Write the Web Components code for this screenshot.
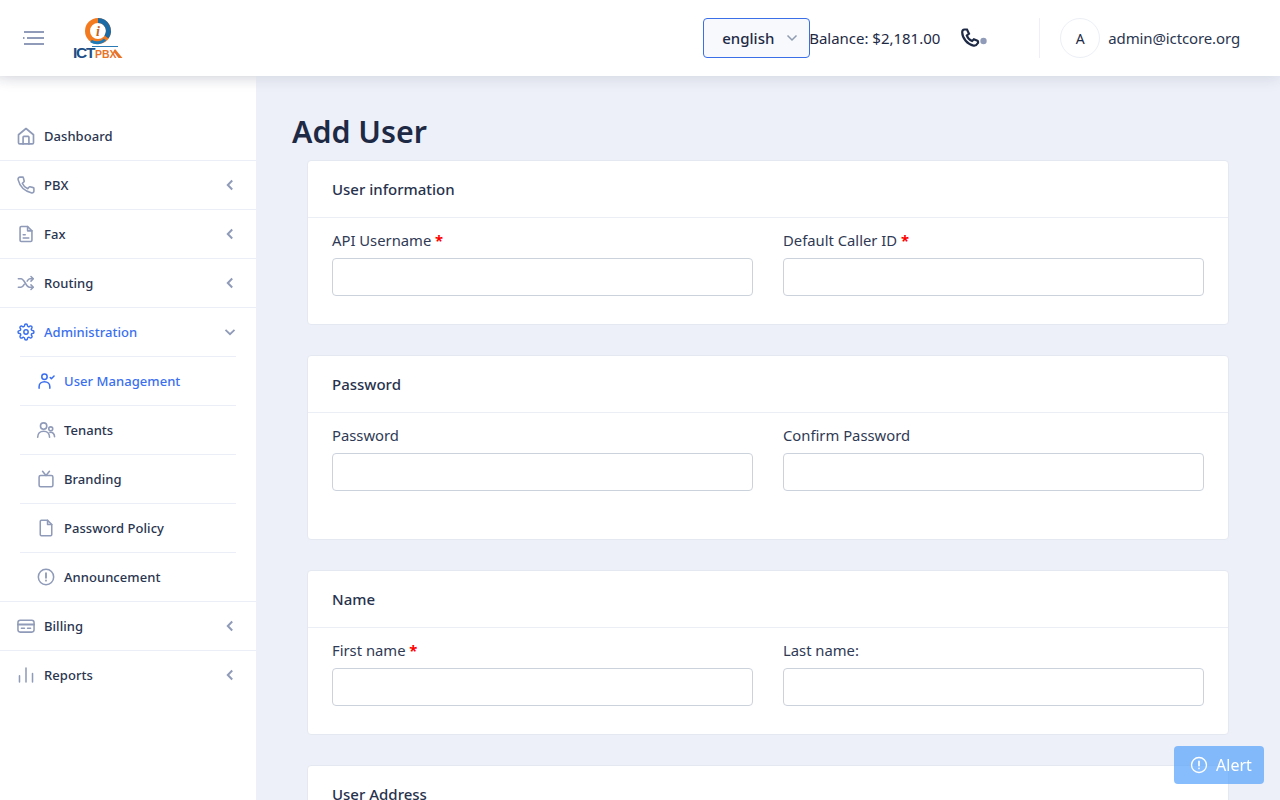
<!DOCTYPE html>
<html lang="en"><head><meta charset="utf-8"><title>Add User</title>
<style>
html,body{margin:0;height:100%;overflow:hidden;background:#edf0f8}
body{font-family:"Noto Sans","Open Sans",sans-serif;color:#1e2a45}
</style></head><body>
<app-shell>
  <app-header slot="header"></app-header>
  <app-sidebar slot="sidebar">
    <nav-item icon="home" label="Dashboard" line="full"></nav-item>
    <nav-item icon="phone" label="PBX" caret="left" line="full"></nav-item>
    <nav-item icon="file" label="Fax" caret="left" line="full"></nav-item>
    <nav-item icon="shuffle" label="Routing" caret="left" line="full"></nav-item>
    <nav-item icon="gear" label="Administration" caret="down" active line="inset"></nav-item>
    <nav-item sub icon="usercheck" label="User Management" active line="inset"></nav-item>
    <nav-item sub icon="users" label="Tenants" line="inset"></nav-item>
    <nav-item sub icon="tv" label="Branding" line="inset"></nav-item>
    <nav-item sub icon="page" label="Password Policy" line="inset"></nav-item>
    <nav-item sub icon="alert" label="Announcement" line="full"></nav-item>
    <nav-item icon="card" label="Billing" caret="left" line="full"></nav-item>
    <nav-item icon="bars" label="Reports" caret="left"></nav-item>
  </app-sidebar>
  <page-title>Add User</page-title>
  <form-card heading="User information">
    <form-field label="API Username" required></form-field>
    <form-field label="Default Caller ID" required></form-field>
  </form-card>
  <form-card heading="Password" extra="20">
    <form-field label="Password"></form-field>
    <form-field label="Confirm Password"></form-field>
  </form-card>
  <form-card heading="Name">
    <form-field label="First name" required></form-field>
    <form-field label="Last name:"></form-field>
  </form-card>
  <form-card heading="User Address"></form-card>
</app-shell>
<alert-button>Alert</alert-button>
<script>
const fit=(s,b)=>`<g transform="translate(12 12) scale(${s}) translate(-12 -12)">${b}</g>`;
const ICONS={
home:'<path d="M3 20V10.500L12 3l9 7.500V20a1.500 1.500 0 0 1-1.500 1.500h-15A1.500 1.500 0 0 1 3 20z"/><path d="M8.500 21.500V13.500a1 1 0 0 1 1-1h5a1 1 0 0 1 1 1v8"/>',
phone:fit(.95,'<path d="M4.500 2h3.200c.5 0 .9.300 1 .8l1 4.200c.1.400 0 .8-.3 1L7.300 9.800c1.300 3 3.900 5.600 6.900 6.900l1.800-2.100c.2-.3.600-.4 1-.3l4.200 1c.5.100.8.500.8 1v3.200c0 1.500-1.200 2.700-2.700 2.500C10 19.800 4.200 14 2 5.200 1.800 3.400 3 2 4.500 2z"/>'),
file:fit(.95,'<path d="M6 2.500h8l5.500 5.500v12a1.500 1.500 0 0 1-1.500 1.500H6A1.500 1.500 0 0 1 4.500 20V4A1.500 1.500 0 0 1 6 2.500z"/><path d="M14 2.500V8h5.500M8.500 13h2.500M8.500 17h7"/>'),
shuffle:fit(.92,'<path d="M2 6.500h3.500c4.500 0 6.500 11 11 11H21M2 17.500h3.500c1.800 0 3.100-1.700 4.200-3.700M13.500 9.500c1-1.700 2-3 3.500-3h4"/><path d="M18.500 3.500l3 3-3 3M18.500 14.500l3 3-3 3"/>'),
gear:fit(.87,'<circle cx="12" cy="12" r="3"/><path d="M19.400 15a1.650 1.650 0 0 0 .33 1.820l.06.06a2 2 0 0 1 0 2.830 2 2 0 0 1-2.830 0l-.06-.06a1.650 1.650 0 0 0-1.820-.33 1.650 1.650 0 0 0-1 1.510V21a2 2 0 0 1-2 2 2 2 0 0 1-2-2v-.09A1.650 1.650 0 0 0 9 19.400a1.650 1.650 0 0 0-1.820.33l-.06.06a2 2 0 0 1-2.830 0 2 2 0 0 1 0-2.830l.06-.06a1.650 1.650 0 0 0 .33-1.820 1.650 1.650 0 0 0-1.510-1H3a2 2 0 0 1-2-2 2 2 0 0 1 2-2h.09A1.650 1.650 0 0 0 4.600 9a1.650 1.650 0 0 0-.33-1.820l-.06-.06a2 2 0 0 1 0-2.830 2 2 0 0 1 2.830 0l.06.06a1.650 1.650 0 0 0 1.820.33H9a1.650 1.650 0 0 0 1-1.510V3a2 2 0 0 1 2-2 2 2 0 0 1 2 2v.09a1.650 1.650 0 0 0 1 1.510 1.650 1.650 0 0 0 1.820-.33l.06-.06a2 2 0 0 1 2.830 0 2 2 0 0 1 0 2.830l-.06.06a1.650 1.650 0 0 0-.33 1.820V9a1.650 1.650 0 0 0 1.510 1H21a2 2 0 0 1 2 2 2 2 0 0 1-2 2h-.09a1.650 1.650 0 0 0-1.510 1z"/>'),
usercheck:fit(.92,'<circle cx="10" cy="6.500" r="3.500"/><path d="M3 21.500v-2C3 15.500 6 13 10 13s7 2.500 7 6.500v2"/><path d="M17.500 7.500l1.500 1.500 3.500-3.500"/>'),
users:fit(.95,'<circle cx="9" cy="7" r="4"/><circle cx="18" cy="10.500" r="2.500"/><path d="M1.500 21c0-4.500 3-7.500 7.500-7.500s7.500 3 7.500 7.500"/><path d="M17 15c3.500-.5 5.800 1.800 5.800 5.500"/>'),
tv:fit(.92,'<rect x="3" y="7.500" width="18" height="14.500" rx="2"/><path d="M7.500 2l4.500 5.500L16.500 2"/>'),
page:fit(.92,'<path d="M6 2h8l5.500 5.500V20.500A1.500 1.500 0 0 1 18 22H6a1.500 1.500 0 0 1-1.500-1.500v-17A1.500 1.500 0 0 1 6 2z"/><path d="M14 2v5.500h5.500"/>'),
alert:fit(.92,'<circle cx="12" cy="12" r="10"/><path d="M12 7v6M12 16.500v.3" stroke-width="2.400"/>'),
card:fit(.92,'<rect x="1.500" y="4.500" width="21" height="15.500" rx="3"/><path d="M1.500 10h21" stroke-width="2.400"/><path d="M6 15h4M14 15h4"/>'),
bars:fit(.92,'<path d="M3.500 13v8M12 3v18M20.500 10v11"/>')
};
const def=(n,c)=>customElements.define(n,c);
class Base extends HTMLElement{constructor(){super();this.attachShadow({mode:'open'})}
 render(h){this.shadowRoot.innerHTML=h}}

def('app-shell',class extends Base{connectedCallback(){this.render(`<style>
:host{display:flex;flex-direction:column;height:100vh;overflow:hidden}
.body{flex:1;display:flex;min-height:0}
.side{flex:0 0 256px;display:block}
main{flex:1;min-width:0;overflow:hidden;padding:36px 51px 0 36px}
</style><slot name="header"></slot><div class="body"><div class="side"><slot name="sidebar"></slot></div><main><slot></slot></main></div>`)}});

def('app-header',class extends Base{connectedCallback(){this.render(`<style>
:host{display:flex;align-items:center;height:76px;background:#fff;box-shadow:0 2px 14px rgba(40,50,80,.13);position:relative;z-index:2;flex:none;box-sizing:border-box;padding:0 40px 0 23px;color:#1e2a45}
.burger{width:22px;height:16px;flex:none;display:block}
.logo{margin-left:27px;width:52px;height:44px;flex:none;display:block}
.spacer{flex:1}
.lang{box-sizing:border-box;width:107px;height:40px;border:1px solid #3a6fe8;border-radius:4px;background:#f7f9fd;display:flex;align-items:center;padding-left:18px;font-size:15px;font-weight:500;color:#1e2a45;gap:12px}
.bal{font-size:15px;color:#1e2a45;white-space:nowrap;letter-spacing:-.02px;margin-left:-1px}
.ph{width:28px;height:24px;margin-left:21px;flex:none;display:block}
.sep{width:1px;height:40px;background:#eef0f5;margin-left:50px;margin-right:20px;flex:none}
.av{box-sizing:border-box;width:40px;height:40px;border:1px solid #eceff5;border-radius:50%;display:flex;align-items:center;justify-content:center;font-size:14px;flex:none}
.mail{margin-left:8px;font-size:15px;white-space:nowrap;color:#2a3550;letter-spacing:-.12px}
svg text{font-family:"Liberation Sans",sans-serif}
</style>
<svg class="burger" viewBox="0 0 22 16" fill="none" stroke="#8f9bb8" stroke-width="2.200"><path d="M1 2h20M4 8h17M1 14h20"/><path d="M0 8h1.500"/></svg>
<svg class="logo" viewBox="0 0 52 44">
 <circle cx="26" cy="15" r="10.500" fill="none" stroke="#f47a20" stroke-width="5"/>
 <path d="M26 4.500a10.500 10.500 0 0 1 8.500 16.500" fill="none" stroke="#1a6aa5" stroke-width="5"/>
 <path d="M19 25a11 11 0 0 0 14 -1.500" fill="none" stroke="#1f7ab8" stroke-width="3"/>
 <text x="26" y="20" font-size="14" font-weight="700" font-style="italic" fill="#c8641c" text-anchor="middle" style="font-family:'Liberation Serif',serif">i</text>
 <path d="M20 30.500h26" stroke="#2b7ab5" stroke-width="1"/>
 <text y="42" font-weight="700"><tspan x="1" font-size="15.500" letter-spacing="-1.300" fill="#1d4f86">ICT</tspan><tspan x="23" font-size="10.500" fill="#e8742a">PBX</tspan></text>
 <path d="M43 33l7.500 9h-4l-5-6.500z" fill="#e8742a"/>
</svg>
<div class="spacer"></div>
<div class="lang">english<svg width="12" height="8" viewBox="0 0 12 8" fill="none" stroke="#8f9bb0" stroke-width="1.500"><path d="M1.500 1.500L6 6l4.500-4.500"/></svg></div>
<div class="bal">Balance: $2,181.00</div>
<svg class="ph" viewBox="0 0 28 24" fill="none" stroke="#1e2a45" stroke-width="2.200"><path transform="translate(-1 1)" d="M4.500 2.500h2.500l2 4.200-2.200 1.800c.8 2.400 3 4.600 5.300 5.500l1.800-1.800 3.500 1.500c.8.500 1 1.600.3 2.600-1 1.700-2.500 2.700-4.200 2.300C7.500 17.400 2.300 11.500 2.200 5.300c0-1.600 1-2.800 2.300-2.800z"/><circle cx="22.500" cy="15" r="3.200" fill="#8f9bb8" stroke="none"/></svg>
<div class="sep"></div><div class="av">A</div><div class="mail">admin@ictcore.org</div>`)}});

def('app-sidebar',class extends Base{connectedCallback(){this.render(`<style>
:host{display:block;box-sizing:border-box;width:256px;height:100%;background:#fff;padding-top:36px;box-shadow:inset 0 14px 14px -14px rgba(40,50,80,.12)}
</style><slot></slot>`)}});

def('nav-item',class extends Base{connectedCallback(){
 const a=n=>this.getAttribute(n),h=n=>this.hasAttribute(n);
 const active=h('active'),sub=h('sub'),col=active?'#3a6ff0':'#8f9bb8',caret=a('caret'),line=a('line');
 let ch='';
 if(caret==='left')ch='<svg class="caret" viewBox="0 0 12 12" fill="none" stroke="#8f9bb8" stroke-width="2"><path d="M8.200 1.500L3.800 6l4.400 4.500"/></svg>';
 if(caret==='down')ch='<svg class="caret" viewBox="0 0 12 12" fill="none" stroke="#8f9bb8" stroke-width="1.800"><path d="M1.500 3.800L6 8.200l4.500-4.400"/></svg>';
 this.render(`<style>
 :host{display:block;box-sizing:border-box;height:49px}
 .row{box-sizing:border-box;height:48px;display:flex;align-items:center;padding:0 20px 0 ${sub?'36px':'16px'};font-size:13px;font-weight:500;color:${active?'#3a6ff0':'#2a3550'};letter-spacing:.05px}
 .ico{width:20px;height:20px;flex:none;margin-right:8px}
 .lbl{flex:1;white-space:nowrap}
 .caret{width:12px;height:12px;flex:none}
 .line{height:1px;background:#ebeef6}
 .inset{margin:0 20px}
 </style><div class="row"><svg class="ico" viewBox="0 0 24 24" fill="none" stroke="${col}" stroke-width="2" stroke-linecap="round" stroke-linejoin="round">${ICONS[a('icon')]||''}</svg><span class="lbl">${a('label')}</span>${ch}</div>${line?`<div class="line ${line==='inset'?'inset':''}"></div>`:''}`);
}});

def('page-title',class extends Base{connectedCallback(){this.render(`<style>
:host{display:block;height:48px;font-size:30.400px;line-height:40px;font-weight:600;color:#1e2a45;white-space:nowrap}
</style><slot></slot>`)}});

def('form-card',class extends Base{connectedCallback(){
 const extra=+this.getAttribute('extra')||0;
 this.render(`<style>
 :host{display:block;box-sizing:border-box;margin:0 0 30px 15px;background:#fff;border:1px solid #e4e8f1;border-radius:4px}
 .hd{box-sizing:border-box;height:57px;border-bottom:1px solid #ebeef5;padding:0 24px 1px;display:flex;align-items:center;font-size:15px;font-weight:500;color:#27324d}
 .bd{display:grid;grid-template-columns:1fr 1fr;column-gap:30px;padding:12px 24px ${28+extra}px;min-height:66px}
 </style><div class="hd">${this.getAttribute('heading')}</div><div class="bd"><slot></slot></div>`);
}});

def('form-field',class extends Base{connectedCallback(){
 const req=this.hasAttribute('required');
 this.render(`<style>
 :host{display:block;min-width:0}
 label{display:block;font-size:14.800px;line-height:20px;color:#2f3a55;margin-bottom:8px;white-space:nowrap}
 b{color:#f00;font-weight:700;margin-left:0}
 input{display:block;box-sizing:border-box;width:100%;height:38px;border:1px solid #ccd2dc;border-radius:4px;background:#fff;padding:0 12px;outline:0}
 </style><label>${this.getAttribute('label')}${req?' <b>*</b>':''}</label><input type="text">`);
}});

def('alert-button',class extends Base{connectedCallback(){this.render(`<style>
:host{position:fixed;right:16px;bottom:16px;box-sizing:border-box;width:90px;height:38px;padding-left:4px;background:rgba(89,163,252,.72);border-radius:4px;display:flex;align-items:center;justify-content:center;gap:8px;color:#fff;font-size:16px;z-index:5}
svg{width:18px;height:18px}
</style><svg viewBox="0 0 24 24" fill="none" stroke="#fff" stroke-width="1.800" stroke-linecap="round"><circle cx="12" cy="12" r="10"/><path d="M12 7v6M12 16.500v.3" stroke-width="2.200"/></svg><slot></slot>`)}});
</script>
</body></html>
